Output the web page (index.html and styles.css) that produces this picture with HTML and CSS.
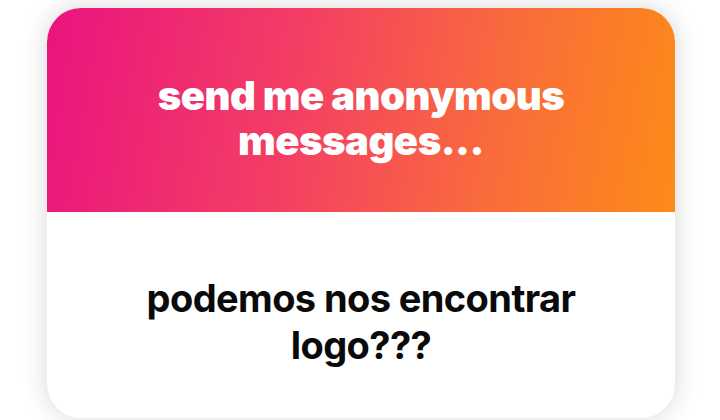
FILE: index.html
```html
<!DOCTYPE html>
<html>
<head>
<meta charset="utf-8">
<link rel="stylesheet" href="styles.css">
</head>
<body>
<div class="card">
  <div class="card-head">
    <h1 class="title">send me anonymous<br>messages...</h1>
  </div>
  <div class="card-body">
    <p class="message">podemos nos encontrar<br>logo???</p>
  </div>
</div>
</body>
</html>
```
FILE: styles.css
```css
html, body {
  margin: 0;
  padding: 0;
  width: 720px;
  height: 420px;
  overflow: hidden;
  background: #ffffff;
}
body {
  padding: 8px 45px 0 47px;
  box-sizing: border-box;
  font-family: Inter, "Noto Sans", sans-serif;
}
.card {
  width: 628px;
  height: 410px;
  border-radius: 34px;
  overflow: hidden;
  background: #fff;
  box-shadow: 0 0 26px rgba(0, 0, 0, 0.16);
  display: flex;
  flex-direction: column;
}
.card-head {
  height: 204px;
  flex: none;
  background: linear-gradient(100deg, #e9147f 0%, #f43f63 40%, #f96a3d 70%, #fe8b17 100%);
  display: flex;
  align-items: center;
  justify-content: center;
}
.title {
  margin: 16px 0 0;
  color: #fff;
  font-size: 40px;
  font-weight: 900;
  line-height: 45px;
  letter-spacing: -0.5px;
  text-align: center;
  font-feature-settings: "calt" 0;
}
.card-body {
  flex: 1;
  display: flex;
  align-items: center;
  justify-content: center;
  padding-top: 14px;
}
.message {
  margin: 0;
  color: #0a0a0a;
  font-size: 38px;
  font-weight: 700;
  line-height: 47px;
  letter-spacing: -0.6px;
  text-align: center;
}
```
